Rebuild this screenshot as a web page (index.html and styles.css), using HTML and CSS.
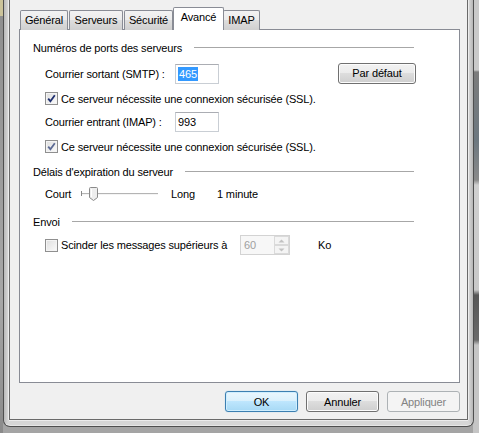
FILE: index.html
```html
<!DOCTYPE html>
<html lang="fr">
  <head>
    <meta charset="UTF-8" />
    <title>Propriétés du compte - Avancé</title>
    <link rel="stylesheet" href="styles.css">
  </head>
  <body>
    <div class="window">
      <div class="dialog">
        <div class="tabs">
          <span class="tab tab-general">Général</span>
          <span class="tab tab-servers">Serveurs</span>
          <span class="tab tab-security">Sécurité</span>
          <span class="tab tab-advanced active">Avancé</span>
          <span class="tab tab-imap">IMAP</span>
        </div>
        <div class="panel">
          <!-- ports -->
          <div class="group-title"><span>Numéros de ports des serveurs</span><i class="rule"></i></div>
          <div class="row row-smtp">
            <span class="field-label">Courrier sortant (SMTP) :</span>
            <span class="textbox"><span class="selected-text">465</span></span>
            <span class="btn btn-default-port">Par défaut</span>
          </div>
          <div class="check row-ssl1">
            <span class="box checked">
              <svg width="9" height="9" viewBox="0 0 9 9"><path d="M1.2 4.6 L3.4 7.2 L7.8 1.2" fill="none" stroke="#1f3070" stroke-width="1.8"/></svg>
            </span>
            <span>Ce serveur nécessite une connexion sécurisée (SSL).</span>
          </div>
          <div class="row row-imap">
            <span class="field-label">Courrier entrant (IMAP) :</span>
            <span class="textbox">993</span>
          </div>
          <div class="check row-ssl2">
            <span class="box checked soft">
              <svg width="9" height="9" viewBox="0 0 9 9"><path d="M1.2 4.6 L3.4 7.2 L7.8 1.2" fill="none" stroke="#5c6a94" stroke-width="1.8"/></svg>
            </span>
            <span>Ce serveur nécessite une connexion sécurisée (SSL).</span>
          </div>

          <!-- timeout -->
          <div class="group-title group-timeout"><span>Délais d'expiration du serveur</span><i class="rule"></i></div>
          <div class="row row-slider">
            <span class="slider-label">Court</span>
            <span class="slider">
              <svg width="77" height="16" viewBox="0 0 77 16">
                <line x1="0.5" y1="5" x2="0.5" y2="10" stroke="#8a8a8a"/>
                <line x1="1" y1="7.5" x2="77" y2="7.5" stroke="#b4b4b4"/>
                <line x1="1" y1="8.5" x2="77" y2="8.5" stroke="#f4f4f4"/>
                <path d="M9.5 1.5 h6 a1 1 0 0 1 1 1 v9 l-4 3 l-4 -3 v-9 a1 1 0 0 1 1 -1 z" fill="#eeeeee" stroke="#8a8a8a"/>
                <line x1="10.5" y1="3" x2="10.5" y2="11" stroke="#ffffff"/>
              </svg>
            </span>
            <span class="slider-long">Long</span>
            <span>1 minute</span>
          </div>

          <!-- sending -->
          <div class="group-title group-send"><span>Envoi</span><i class="rule"></i></div>
          <div class="check row-split">
            <span class="box"></span>
            <span class="split-label">Scinder les messages supérieurs à</span>
            <span class="spinner">
              <span class="spinner-value">60</span>
              <span class="spinner-arrows">
                <span class="arrow">
                  <svg width="7" height="4" viewBox="0 0 7 4"><path d="M0.5 3.5 L3.5 0.5 L6.5 3.5 z" fill="#c2c2c2"/></svg>
                </span>
                <span class="arrow">
                  <svg width="7" height="4" viewBox="0 0 7 4"><path d="M0.5 0.5 L3.5 3.5 L6.5 0.5 z" fill="#c2c2c2"/></svg>
                </span>
              </span>
            </span>
            <span class="unit">Ko</span>
          </div>
        </div>
        <div class="actions">
          <span class="btn btn-ok">OK</span>
          <span class="btn">Annuler</span>
          <span class="btn btn-disabled">Appliquer</span>
        </div>
      </div>
    </div>
  </body>
</html>
```

FILE: styles.css
```css
html,
body {
  height: 100%;
}
body {
  margin: 0;
  font-family: "Liberation Sans", Arial, sans-serif;
  font-size: 11px;
  letter-spacing: -0.15px;
  color: #000;
  overflow: hidden;
  background:
    linear-gradient(to bottom, #cbc39a 0, #cbc39a 16px, #8f8f8f 16px, #a7a7a7 300px, #8a8a8a 433px) left top / 3px 100% no-repeat,
    linear-gradient(to bottom, #c9c9c9 0, #c9c9c9 70px, #7c7c7c 72px, #6d7880 140px, #8a8a8a 180px, #cfcfcf 185px, #c8c8c8 290px, #575757 295px, #6a6a6a 340px, #c5c5c5 345px) right top / 6px 100% no-repeat,
    #a4a4a4;
}

/* outer window frame, title bar scrolled out of view */
.window {
  box-sizing: border-box;
  width: 471px;
  height: 427px;
  margin-left: 3px;
  padding: 0 5px 6px 5px;
  border: 1px solid #4f4f4f;
  border-top: none;
  border-radius: 0 0 7px 7px;
  background: linear-gradient(to right, #b9b9b9, #d6d6d6 4px, #d6d6d6 calc(100% - 4px), #b5b5b5);
  box-shadow: inset 0 -1px 0 #e6e6e6;
}
.dialog {
  box-sizing: border-box;
  height: 100%;
  padding: 7px 7px 0 9px;
  border: 1px solid #6a6a6a;
  border-top: none;
  background: #f0f0f0;
  box-shadow: 0 1px 0 #ececec, 1px 0 0 #ececec, -1px 0 0 #ececec;
}

/* tab strip */
.tabs {
  display: flex;
  align-items: flex-end;
  height: 22px;
  padding-left: 1px;
  position: relative;
  z-index: 1;
}
.tab {
  box-sizing: border-box;
  display: flex;
  justify-content: center;
  height: 20px;
  padding-top: 1px;
  margin-right: 1px;
  margin-bottom: -1px;
  border: 1px solid #898c95;
  border-bottom: none;
  border-radius: 2px 2px 0 0;
  background: linear-gradient(to bottom, #f3f3f3, #ebebeb 50%, #dddddd 50%, #cfcfcf);
  line-height: 17px;
  white-space: nowrap;
}
.tab-general {
  width: 48px;
}
.tab-servers {
  width: 54px;
}
.tab-security {
  width: 49px;
  margin-right: 0;
}
.tab-advanced {
  width: 51px;
}
.tab-imap {
  width: 37px;
}
.tab.active {
  height: 23px;
  margin-right: -1px;
  padding-top: 0;
  background: #fff;
  line-height: 18px;
  position: relative;
  z-index: 1;
}

.panel {
  box-sizing: border-box;
  height: 354px;
  padding: 11px 0 0 13px;
  border: 1px solid #898c95;
  background: #fff;
}

/* group headers with trailing rule */
.group-title {
  display: flex;
  align-items: center;
  height: 15px;
  width: 381px;
  line-height: 15px;
}
.group-title .rule {
  flex: 1;
  height: 1px;
  margin: 0 0 2px 12px;
  background: #a7a7a7;
  box-shadow: 0 1px 0 #fff;
}
.group-timeout {
  margin-top: 11px;
}
.group-send {
  margin-top: 11px;
}

.row {
  display: flex;
  align-items: center;
  padding-left: 12px;
}
.row-smtp {
  height: 21px;
  margin-top: 7px;
}
.row-imap {
  height: 20px;
  margin-top: 6px;
}
.field-label {
  width: 130px;
  white-space: nowrap;
}
.textbox {
  box-sizing: border-box;
  display: flex;
  align-items: center;
  width: 44px;
  height: 20px;
  padding-left: 2px;
  border: 1px solid #c9ced4;
  border-top-color: #abadb3;
  background: #fff;
}
.selected-text {
  background: #3399ff;
  color: #fff;
  line-height: 14px;
  padding: 0 1px;
}

/* checkboxes */
.check {
  display: flex;
  align-items: center;
  height: 15px;
  padding-left: 12px;
  white-space: nowrap;
}
.row-ssl1 {
  margin-top: 7px;
}
.row-ssl2 {
  margin-top: 7px;
}
.box {
  box-sizing: border-box;
  display: flex;
  align-items: center;
  justify-content: center;
  width: 13px;
  height: 13px;
  margin-right: 3px;
  border: 1px solid #8f8f8f;
  background: linear-gradient(135deg, #dedede, #fbfbfb);
  box-shadow: inset 0 0 0 1px #f4f4f4;
}

/* slider */
.row-slider {
  height: 21px;
  margin-top: 3px;
}
.slider-label {
  width: 36px;
}
.slider {
  display: flex;
  width: 90px;
}
.slider-long {
  width: 46px;
}

/* split messages */
.row-split {
  height: 20px;
  margin-top: 5px;
}
.split-label {
  width: 179px;
}
.spinner {
  box-sizing: border-box;
  display: flex;
  width: 50px;
  height: 20px;
  border: 1px solid #d3d3d3;
  background: #f7f7f7;
}
.spinner-value {
  flex: 1;
  padding-left: 3px;
  line-height: 18px;
  color: #a0a0a0;
}
.spinner-arrows {
  display: flex;
  flex-direction: column;
  width: 15px;
}
.arrow {
  flex: 1;
  display: flex;
  align-items: center;
  justify-content: center;
  border: 1px solid #dadada;
  background: #f4f4f4;
}
.unit {
  margin-left: 28px;
}

/* push buttons */
.btn {
  box-sizing: border-box;
  display: inline-flex;
  align-items: center;
  justify-content: center;
  width: 73px;
  height: 21px;
  border: 1px solid #707070;
  border-radius: 3px;
  background: linear-gradient(to bottom, #f2f2f2, #ebebeb 50%, #dddddd 50%, #cfcfcf);
  box-shadow: inset 0 0 0 1px #fcfcfc;
  white-space: nowrap;
}
.btn-default-port {
  width: 78px;
  height: 21px;
  margin-left: 119px;
  margin-top: -1px;
}
.actions {
  display: flex;
  justify-content: flex-end;
  gap: 8px;
  margin-top: 8px;
  padding-right: 0;
}
.btn-ok {
  border-color: #3c7fb1;
  background: linear-gradient(to bottom, #eaf6fd, #d9f0fc 50%, #bee6fd 50%, #a7d9f5);
  box-shadow: inset 0 0 0 1px #cfeefe, 0 0 1px #7ec4ea;
}
.btn-disabled {
  border-color: #adb2b5;
  background: #f4f4f4;
  box-shadow: none;
  color: #838383;
}
```
